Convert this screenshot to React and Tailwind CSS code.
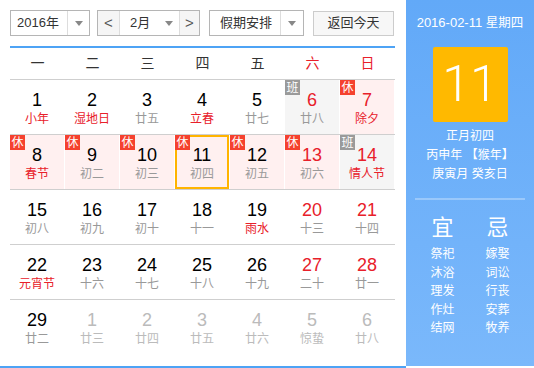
import React from "react";

const WEEK = ["一", "二", "三", "四", "五", "六", "日"];

// n: number, l: lunar, nr: red number, lr: red lunar, tag: 休/班, dim: other month, today
const ROWS = [
  [
    { n: 1, l: "小年", lr: true },
    { n: 2, l: "湿地日", lr: true },
    { n: 3, l: "廿五" },
    { n: 4, l: "立春", lr: true },
    { n: 5, l: "廿七" },
    { n: 6, l: "廿八", nr: true, tag: "班" },
    { n: 7, l: "除夕", nr: true, lr: true, tag: "休" },
  ],
  [
    { n: 8, l: "春节", lr: true, tag: "休" },
    { n: 9, l: "初二", tag: "休" },
    { n: 10, l: "初三", tag: "休" },
    { n: 11, l: "初四", tag: "休", today: true },
    { n: 12, l: "初五", tag: "休" },
    { n: 13, l: "初六", nr: true, tag: "休" },
    { n: 14, l: "情人节", nr: true, lr: true, tag: "班" },
  ],
  [
    { n: 15, l: "初八" },
    { n: 16, l: "初九" },
    { n: 17, l: "初十" },
    { n: 18, l: "十一" },
    { n: 19, l: "雨水", lr: true },
    { n: 20, l: "十三", nr: true },
    { n: 21, l: "十四", nr: true },
  ],
  [
    { n: 22, l: "元宵节", lr: true },
    { n: 23, l: "十六" },
    { n: 24, l: "十七" },
    { n: 25, l: "十八" },
    { n: 26, l: "十九" },
    { n: 27, l: "二十", nr: true },
    { n: 28, l: "廿一", nr: true },
  ],
  [
    { n: 29, l: "廿二" },
    { n: 1, l: "廿三", dim: true },
    { n: 2, l: "廿四", dim: true },
    { n: 3, l: "廿五", dim: true },
    { n: 4, l: "廿六", dim: true },
    { n: 5, l: "惊蛰", dim: true },
    { n: 6, l: "廿八", dim: true },
  ],
];

const YI = ["祭祀", "沐浴", "理发", "作灶", "结网"];
const JI = ["嫁娶", "词讼", "行丧", "安葬", "牧养"];

const Caret = () => (
  <span className="w-0 h-0 border-x-[4px] border-x-transparent border-t-[5px] border-t-[#888]" />
);

function Cell({ d }) {
  const bg = d.tag === "休" ? "bg-[#fff0f0]" : d.tag === "班" ? "bg-[#f5f5f5]" : "bg-white";
  const numColor = d.dim ? "text-[#bbb]" : d.nr ? "text-[#e8202a]" : "text-black";
  const lunColor = d.dim ? "text-[#bbb]" : d.lr ? "text-[#e8202a]" : "text-[#999]";
  return (
    <div className="pr-px h-[54px]">
      <div
        className={`relative h-full flex flex-col items-center ${bg} ${
          d.today ? "border-2 border-[#ffb400]" : ""
        }`}
      >
        {d.tag && (
          <span
            className={`absolute ${d.today ? "-left-[2px] -top-[2px]" : "left-0 top-0"} w-[15px] h-[15px] flex items-center justify-center text-[12px] leading-none text-white ${
              d.tag === "休" ? "bg-[#f5412e]" : "bg-[#9a9a9a]"
            }`}
          >
            {d.tag}
          </span>
        )}
        <div className={`${d.today ? "mt-[8px]" : "mt-[10px]"} text-[18px] leading-[20px] ${numColor}`}>{d.n}</div>
        <div className={`text-[12px] leading-[18px] ${lunColor}`}>{d.l}</div>
      </div>
    </div>
  );
}

export default function App() {
  return (
    <div
      className="w-[534px] h-[368px] flex bg-white overflow-hidden"
      style={{ fontFamily: '"Liberation Sans", Arial, "Noto Sans CJK SC", sans-serif' }}
    >
      <div className="w-[406px] h-[368px] flex flex-col border-b-2 border-[#4ea3f5]">
        <div className="pl-[10px] pr-[11px] pt-[10px]">
          <div className="flex items-center h-[26px] text-[13px] text-[#333]">
            <div className="w-[80px] h-[26px] flex border border-[#b5b5b5]">
              <div className="w-[56px] flex items-center pl-[6px]">2016年</div>
              <div className="flex-1 flex items-center justify-center border-l border-[#ddd]"><Caret /></div>
            </div>
            <div className="ml-[7px] w-[103px] h-[26px] flex border border-[#b5b5b5]">
              <div className="w-[22px] flex items-center justify-center bg-[#f5f5f5] border-r border-[#ddd] text-[15px] text-[#555]">&lt;</div>
              <div className="w-[59px] flex items-center justify-between pl-[10px] pr-[6px]">
                2月<Caret />
              </div>
              <div className="flex-1 flex items-center justify-center bg-[#f5f5f5] border-l border-[#ddd] text-[15px] text-[#555]">&gt;</div>
            </div>
            <div className="ml-[9px] w-[95px] h-[26px] flex border border-[#b5b5b5]">
              <div className="w-[70px] flex items-center pl-[10px]">假期安排</div>
              <div className="flex-1 flex items-center justify-center border-l border-[#ddd]"><Caret /></div>
            </div>
            <div className="ml-[9px] w-[81px] h-[25px] flex items-center justify-center border border-[#ccc] bg-[#f7f7f7]">
              返回今天
            </div>
          </div>
          <div className="mt-[10px] h-[2px] bg-[#4ea3f5]" />
          <div className="grid grid-cols-7 h-[32px] items-center text-[14px] border-b border-[#cfcfcf]">
            {WEEK.map((w, i) => (
              <div key={w} className={`text-center ${i > 4 ? "text-[#e8202a]" : "text-[#333]"}`}>{w}</div>
            ))}
          </div>
          {ROWS.map((row, ri) => (
            <div
              key={ri}
              className={`grid grid-cols-7 ${ri < ROWS.length - 1 ? "border-b border-[#cfcfcf]" : ""}`}
            >
              {row.map((d, ci) => (
                <Cell key={ci} d={d} />
              ))}
            </div>
          ))}
        </div>
      </div>

      <div className="w-[128px] h-[366px] bg-gradient-to-b from-[#62a9f8] to-[#7ab8fb] flex flex-col items-center text-white">
        <div className="mt-[14px] text-[13px] leading-[17px] whitespace-nowrap">
          2016-02-11 <span className="text-[12.5px]">星期四</span>
        </div>
        <div
          className="mt-[15px] w-[75px] h-[75px] bg-[#ffb900] rounded-[2px] flex items-center justify-center text-[50px] font-light"
          style={{ fontFamily: "Roboto, sans-serif" }}
        >
          11
        </div>
        <div className="mt-[5px] text-[12px] leading-[19px] text-center">
          <div>正月初四</div>
          <div>丙申年 【猴年】</div>
          <div>庚寅月 癸亥日</div>
        </div>
        <div className="mt-[14px] w-[110px] h-[2px] bg-white/30" />
        <div className="mt-[15px] w-[110px] grid grid-cols-2 text-center">
          <div className="text-[22px] leading-[26px]">宜</div>
          <div className="text-[22px] leading-[26px]">忌</div>
          <div className="mt-[4px] text-[12px] leading-[18.5px]">
            {YI.map((t) => <div key={t}>{t}</div>)}
          </div>
          <div className="mt-[4px] text-[12px] leading-[18.5px]">
            {JI.map((t) => <div key={t}>{t}</div>)}
          </div>
        </div>
      </div>
    </div>
  );
}
